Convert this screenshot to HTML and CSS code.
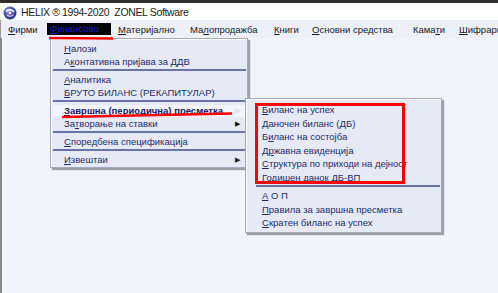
FILE: index.html
```html
<!DOCTYPE html>
<html lang="mk">
<head>
<meta charset="utf-8">
<title>HELIX</title>
<link rel="stylesheet" href="styles.css">
</head>
<body>
<div class="window">
  <header class="titlebar">
    <svg class="app-icon" width="14" height="14" viewBox="0 0 14 14">
      <defs>
        <radialGradient id="g" cx="40%" cy="35%" r="70%">
          <stop offset="0" stop-color="#9aa6e8"/>
          <stop offset="0.6" stop-color="#3b4aa8"/>
          <stop offset="1" stop-color="#26307a"/>
        </radialGradient>
      </defs>
      <circle cx="7" cy="7" r="6.5" fill="url(#g)"/>
      <path d="M3 5.5 C5 3, 9 3, 11 6" stroke="#fff" stroke-width="1.4" fill="none"/>
      <path d="M4 9 C6 11, 9 10.5, 10.5 8.5" stroke="#f2c4dc" stroke-width="1.2" fill="none"/>
      <circle cx="7" cy="7" r="1.3" fill="#fff"/>
    </svg>
    <span class="title-text">HELIX ® 1994-2020&nbsp;&nbsp;ZONEL Software</span>
  </header>

  <nav class="menubar">
    <span class="mitem"><u>Ф</u>ирми</span>
    <span class="mitem"><span class="active"><u>Ф</u>инансово</span></span>
    <span class="mitem"><u>М</u>атеријално</span>
    <span class="mitem">Ма<u>л</u>опродажба</span>
    <span class="mitem"><u>К</u>ниги</span>
    <span class="mitem"><u>О</u>сновни средства</span>
    <span class="mitem">Кама<u>т</u>и</span>
    <span class="mitem"><u>Ш</u>ифрарн</span>
  </nav>

  <main class="desk"></main>

  <div class="menu menu-main">
    <div class="row"><span><u>Н</u>алози</span></div>
    <div class="row"><span>А<u>к</u>онтативна пријава за ДДВ</span></div>
    <div class="sep"></div>
    <div class="row"><span><u>А</u>налитика</span></div>
    <div class="row"><span><u>Б</u>РУТО БИЛАНС (РЕКАПИТУЛАР)</span></div>
    <div class="sep"></div>
    <div class="row current"><span><u>З</u>авршна (периодична) пресметка</span><span class="arrow">▶</span></div>
    <div class="row"><span>За<u>т</u>ворање на ставки</span><span class="arrow">▶</span></div>
    <div class="sep"></div>
    <div class="row"><span><u>С</u>поредбена спецификација</span></div>
    <div class="sep"></div>
    <div class="row"><span><u>И</u>звештаи</span><span class="arrow">▶</span></div>
  </div>

  <div class="menu menu-sub">
    <div class="row"><span><u>Б</u>иланс на успех</span></div>
    <div class="row"><span><u>Д</u>аночен биланс (ДБ)</span></div>
    <div class="row"><span>Б<u>и</u>ланс на состојба</span></div>
    <div class="row"><span>Д<u>р</u>жавна евиденција</span></div>
    <div class="row"><span><u>С</u>труктура по приходи на дејност</span></div>
    <div class="row"><span><u>Г</u>одишен данок ДБ-ВП</span></div>
    <div class="sep inset"></div>
    <div class="row"><span><u>А</u> О П</span></div>
    <div class="row"><span><u>П</u>равила за завршна пресметка</span></div>
    <div class="row"><span><u>С</u>кратен биланс на успех</span></div>
  </div>

  <div class="mark-box"></div>
  <svg class="mark-lines" width="498" height="293" viewBox="0 0 498 293">
    <path d="M49 38 L113 38.6" stroke="#f00" stroke-width="2.5" fill="none"/>
    <path d="M62 117 L232 113.5" stroke="#f00" stroke-width="2.5" fill="none"/>
  </svg>
</div>
</body>
</html>
```

FILE: styles.css
```css
* { box-sizing: border-box; }
html, body {
  margin: 0;
  padding: 0;
  width: 498px;
  height: 293px;
  overflow: hidden;
  background: #f1f4fc;
}
.window {
  position: relative;
  width: 498px;
  height: 293px;
  display: flex;
  flex-direction: column;
  font-family: "Liberation Sans", Arial, sans-serif;
  font-size: 9.5px;
  color: #1e2a66;
  border-top: 3px solid #2e2e2e;
}
.titlebar {
  height: 17px;
  background: #ffffff;
  display: flex;
  align-items: center;
  padding-left: 3px;
  gap: 4px;
  flex: none;
}
.app-icon { display: block; margin-top: 2px; }
.title-text {
  font-size: 10.5px;
  letter-spacing: -0.35px;
  color: #1a1a1a;
}
.menubar {
  height: 18px;
  background: #edf0f8;
  display: grid;
  grid-template-columns: 39px 71px 72px 84px 38px 101px 46px 1fr;
  align-items: center;
  padding-left: 7px;
  flex: none;
  border-left: 1px solid #9a9a9a;
  white-space: nowrap;
  overflow: hidden;
}
.mitem {
  color: #1a1a1a;
  font-size: 9.5px;
}
.mitem .active {
  display: inline-block;
  width: 64px;
  height: 12px;
  line-height: 12px;
  background: #000;
  color: #1a1ad8;
  padding-left: 3px;
}
.desk {
  flex: 1;
  background: #f1f4fc;
  border-left: 2px solid #8a8a8a;
}
.menu {
  position: absolute;
  background: #e6eaf6;
  border: 1px solid #a4a9c0;
  box-shadow: inset 1px 1px 0 #ffffff, 2px 2px 1px rgba(0,0,0,0.35);
  white-space: nowrap;
}
.menu-main {
  left: 50px;
  top: 35px;
  width: 198px;
  padding: 3px 1px 1px 2px;
}
.menu-sub {
  left: 245px;
  top: 95px;
  width: 197px;
  padding: 4px 1px 2px 2px;
}
.row {
  height: 13px;
  line-height: 13px;
  padding-left: 11px;
  padding-right: 6px;
  display: flex;
  justify-content: space-between;
}
.menu-sub .row {
  height: 13.5px;
  line-height: 13.5px;
  padding-left: 14px;
}
.row u { text-decoration-thickness: 1px; text-underline-offset: 1px; }
.row.current {
  background: #f2f5fd;
  font-weight: bold;
  color: #18205e;
}
.arrow {
  font-size: 7px;
  color: #111;
}
.row.current .arrow { color: #dfe3f3; }
.sep {
  height: 5px;
  border-top: 2px solid #6a73a8;
  border-bottom: 3px solid #e6eaf6;
  position: relative;
  top: 1px;
}
.sep.inset { margin-left: 8px; }
.mark-box {
  position: absolute;
  left: 255px;
  top: 100px;
  width: 150px;
  height: 81px;
  border: 3px solid #f00;
}
.mark-lines {
  position: absolute;
  left: 0;
  top: -3px;
  pointer-events: none;
}
```
